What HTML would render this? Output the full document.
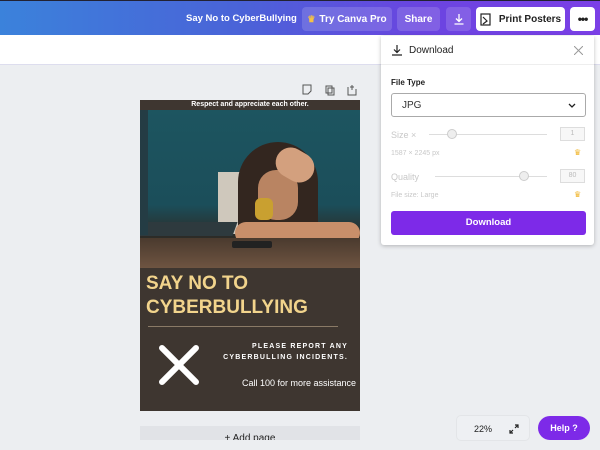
<!DOCTYPE html>
<html><head><meta charset="utf-8">
<style>
*{margin:0;padding:0;box-sizing:border-box}
body{width:600px;height:450px;overflow:hidden;position:relative;background:#eceef1;font-family:"Liberation Sans",sans-serif}
.top{position:absolute;left:0;top:0;width:600px;height:35px;background:linear-gradient(90deg,#3b82db 0%,#4a63d8 40%,#6a45e0 70%,#7b3fe6 100%);border-top:1px solid #223}
.tb{position:absolute;width:600px;height:30px;left:0;top:35px;background:#fff;border-bottom:1px solid #dde}
.t{position:absolute;color:#fff;font-size:9.5px;font-weight:bold;white-space:nowrap}
.btn{position:absolute;top:6px;height:24px;border-radius:4px;background:rgba(255,255,255,.15);color:#fff;font-size:10px;font-weight:bold;display:flex;align-items:center;justify-content:center;white-space:nowrap}
.wbtn{background:#fff;color:#222}
.panel{position:absolute;left:381px;top:36px;width:213px;height:209px;background:#fff;box-shadow:0 1px 4px rgba(0,0,0,.25);border-radius:0 0 3px 3px}
.g{color:#c8c8c8;font-size:9px;position:absolute}
.poster{position:absolute;left:140px;top:100px;width:220px;height:311px;background:#3e3630}
</style></head><body>
<div class="top">
<div class="t" style="left:186px;top:12px">Say No to CyberBullying</div>
<div class="btn" style="left:302px;width:90px"><span style="color:#f6c343;font-size:9px;margin-right:4px">♛</span>Try Canva Pro</div>
<div class="btn" style="left:397px;width:43px">Share</div>
<div class="btn" style="left:446px;width:25px"><svg width="12" height="12" viewBox="0 0 12 12" fill="none" stroke="#fff" stroke-width="1.3"><path d="M6 1v7M3 5.5l3 3 3-3M1.5 11h9"/></svg></div>
<div class="btn wbtn" style="left:476px;width:89px"><svg width="11" height="13" viewBox="0 0 11 13" fill="none" stroke="#222" stroke-width="1.2" style="margin-right:8px"><rect x="1" y="1" width="9" height="11"/><path d="M3 4l4 4-4 3"/></svg>Print Posters</div>
<div class="btn wbtn" style="left:570px;width:25px;font-size:12px;letter-spacing:-1px">•••</div>
</div>
<div class="tb"></div>
<div style="position:absolute;left:301px;top:83px;width:60px;height:12px">
<svg width="60" height="12" fill="none" stroke="#555" stroke-width="1"><path d="M2 1h8v6l-3 3H2z"/><rect x="25" y="2" width="6" height="7"/><rect x="27" y="4" width="6" height="7"/><path d="M47 3v8h8V5M51 1v5M49 3h4"/></svg>
</div>
<div class="poster">
<div style="height:10px;color:#fff;font-size:7px;font-weight:bold;text-align:center;line-height:10px">Respect and appreciate each other.</div>
<div style="position:absolute;left:0;top:10px;width:220px;height:158px;background:linear-gradient(180deg,#1d5560 0%,#1b4e5a 60%,#2c2b27 80%,#4a3a2c 100%);overflow:hidden">
<div style="position:absolute;left:78px;top:62px;width:32px;height:62px;background:#cfc8bc"></div>
<div style="position:absolute;left:98px;top:32px;width:80px;height:100px;border-radius:40px 40px 10px 10px;background:#33261f"></div>
<div style="position:absolute;left:118px;top:60px;width:40px;height:50px;border-radius:18px;background:#b98462"></div>
<div style="position:absolute;left:135px;top:40px;width:40px;height:30px;border-radius:15px;background:#d3a07e;transform:rotate(30deg)"></div>
<div style="position:absolute;left:115px;top:88px;width:18px;height:22px;border-radius:6px;background:#c9a030"></div>
<div style="position:absolute;left:95px;top:112px;width:125px;height:22px;border-radius:11px;background:#c98f6a"></div>
<div style="position:absolute;left:0;top:112px;width:95px;height:14px;background:#2e3a3e;transform:skewX(-20deg)"></div>
<div style="position:absolute;left:0;top:0;width:8px;height:125px;background:#243c44"></div>
<div style="position:absolute;left:0;top:128px;width:220px;height:30px;background:linear-gradient(180deg,#4a3a2e,#6e5441)"></div>
<div style="position:absolute;left:92px;top:131px;width:40px;height:7px;background:#222;border-radius:2px"></div>
</div>
<div style="position:absolute;left:6px;top:172px;color:#f2d48c;font-size:19px;font-weight:bold;line-height:24px;white-space:nowrap">SAY NO TO<br>CYBERBULLYING</div>
<div style="position:absolute;left:8px;top:226px;width:190px;height:1px;background:#8a7a66"></div>
<div style="position:absolute;right:12px;top:241px;color:#fff;font-size:7px;font-weight:bold;letter-spacing:1.2px;line-height:11px;text-align:right;white-space:nowrap">PLEASE REPORT ANY<br>CYBERBULLING INCIDENTS.</div>
<div style="position:absolute;left:102px;top:278px;color:#fff;font-size:9px;white-space:nowrap">Call 100 for more assistance</div>
<svg style="position:absolute;left:18px;top:244px" width="42" height="42"><path d="M4 4l34 34M38 4L4 38" stroke="#fff" stroke-width="6" stroke-linecap="round"/></svg>
</div>
<div style="position:absolute;left:140px;top:426px;width:220px;height:24px;background:#e1e3e7;text-align:center;font-size:10px;color:#222;padding-top:7px">+ Add page</div>
<div style="position:absolute;left:0;top:440px;width:600px;height:10px;background:#eceef1"></div>
<div class="panel">
<div style="height:29px;border-bottom:1px solid #eee;position:relative">
<svg style="position:absolute;left:10px;top:8px" width="12" height="12" fill="none" stroke="#222" stroke-width="1.2"><path d="M6 1v7M3 5.5l3 3 3-3M1 11h10"/></svg>
<div style="position:absolute;left:28px;top:9px;font-size:10px;color:#222">Download</div>
<svg style="position:absolute;left:193px;top:10px" width="9" height="9" stroke="#999" stroke-width="1"><path d="M0 0l9 9M9 0L0 9"/></svg>
</div>
<div style="position:absolute;left:10px;top:42px;font-size:8px;font-weight:bold;color:#222">File Type</div>
<div style="position:absolute;left:10px;top:57px;width:195px;height:24px;border:1px solid #aaa;border-radius:3px;font-size:10px;color:#333;padding:6px 0 0 10px">JPG
<svg style="position:absolute;right:9px;top:9px" width="8" height="5" fill="none" stroke="#222" stroke-width="1.3"><path d="M1 1l3 3 3-3"/></svg></div>
<div class="g" style="left:10px;top:94px;font-size:9px">Size ×</div>
<div style="position:absolute;left:48px;top:98px;width:118px;height:1px;background:#ddd"></div>
<div style="position:absolute;left:66px;top:93px;width:10px;height:10px;border-radius:5px;background:#eee;border:1px solid #ccc"></div>
<div style="position:absolute;left:179px;top:91px;width:25px;height:14px;border:1px solid #ddd;background:#f7f7f7;font-size:7px;color:#bbb;text-align:center;line-height:12px">1</div>
<div class="g" style="left:10px;top:114px;font-size:7px">1587 × 2245 px</div>
<div style="position:absolute;left:193px;top:112px;color:#f0b429;font-size:8px">♛</div>
<div class="g" style="left:10px;top:136px;font-size:9px">Quality</div>
<div style="position:absolute;left:54px;top:140px;width:112px;height:1px;background:#ddd"></div>
<div style="position:absolute;left:138px;top:135px;width:10px;height:10px;border-radius:5px;background:#eee;border:1px solid #ccc"></div>
<div style="position:absolute;left:179px;top:133px;width:25px;height:14px;border:1px solid #ddd;background:#f7f7f7;font-size:7px;color:#bbb;text-align:center;line-height:12px">80</div>
<div class="g" style="left:10px;top:156px;font-size:7px">File size: Large</div>
<div style="position:absolute;left:193px;top:154px;color:#f0b429;font-size:8px">♛</div>
<div style="position:absolute;left:10px;top:175px;width:195px;height:24px;background:#7d2ae8;border-radius:3px;color:#fff;font-size:9.5px;font-weight:bold;text-align:center;line-height:24px">Download</div>
</div>
<div style="position:absolute;left:456px;top:415px;width:74px;height:26px;border-radius:5px;background:#eef0f3;border:1px solid #e3e5e8;font-size:9px;color:#222;padding:8px 0 0 17px">22%
<svg style="position:absolute;left:52px;top:8px" width="10" height="10" fill="none" stroke="#222" stroke-width="1.2"><path d="M6 1h3v3M9 1L6 4M4 9H1V6M1 9l3-3"/></svg></div>
<div style="position:absolute;left:538px;top:416px;width:52px;height:24px;border-radius:12px;background:#7d2ae8;color:#fff;font-size:9px;font-weight:bold;text-align:center;line-height:24px">Help ?</div>
</body></html>
